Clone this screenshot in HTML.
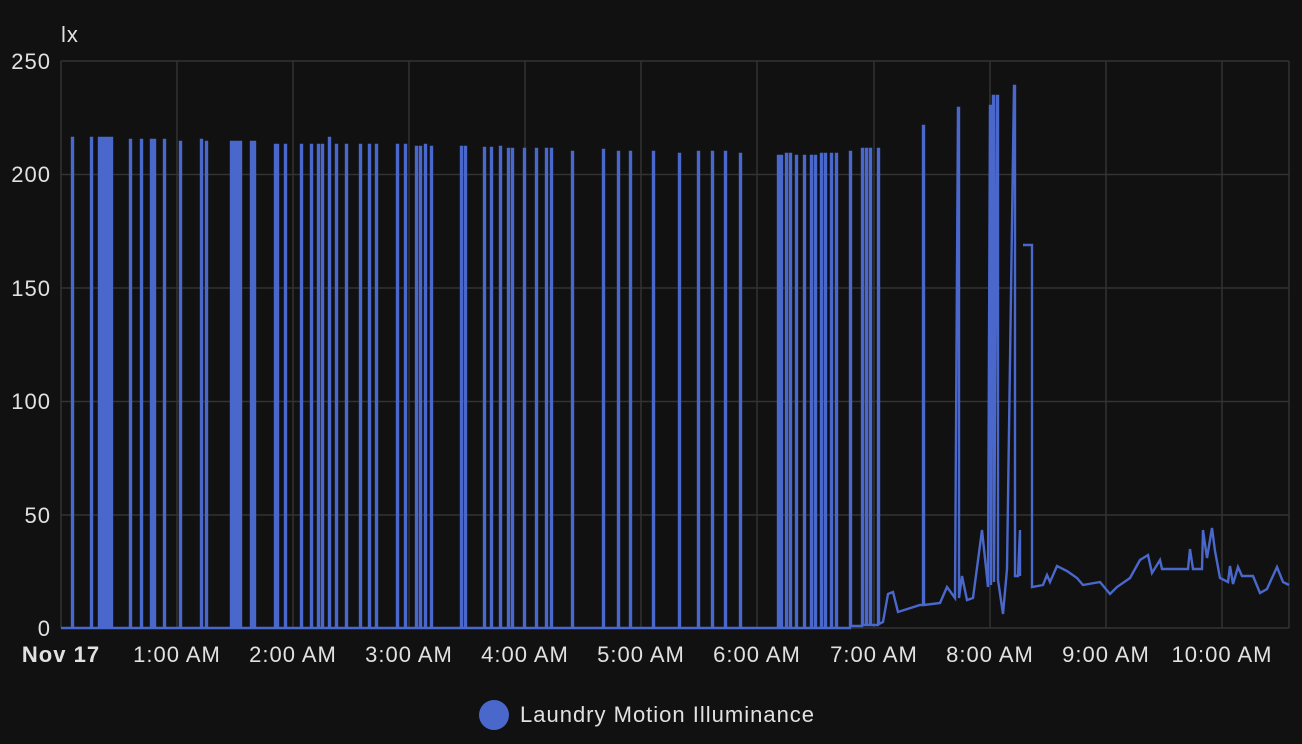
<!DOCTYPE html>
<html><head><meta charset="utf-8"><style>
html,body{margin:0;padding:0;background:#111111;width:1302px;height:744px;overflow:hidden}
svg{display:block}
text{font-family:"Liberation Sans",sans-serif;fill:#e1e1e1;letter-spacing:1px}
</style></head><body>
<svg width="1302" height="744" viewBox="0 0 1302 744">
<g stroke="#333" stroke-width="1.5" fill="none">
<path d="M61 61H1289M61 174.5H1289M61 288H1289M61 401.5H1289M61 515H1289M61 628H1289"/>
<path d="M61 61V628M177 61V628M293 61V628M409 61V628M525 61V628M641 61V628M757 61V628M874 61V628M990 61V628M1106 61V628M1222 61V628M1289 61V628"/>
</g>
<g font-size="22" text-anchor="end">
<text x="51" y="69">250</text><text x="51" y="182">200</text><text x="51" y="296">150</text><text x="51" y="409">100</text><text x="51" y="523">50</text><text x="51" y="636">0</text>
</g>
<text x="61" y="42" font-size="22">lx</text>
<g font-size="22" text-anchor="middle">
<text x="61" y="662" font-weight="bold" fill="#fff" letter-spacing="0">Nov 17</text>
<text x="177" y="662">1:00 AM</text><text x="293" y="662">2:00 AM</text><text x="409" y="662">3:00 AM</text><text x="525" y="662">4:00 AM</text><text x="641" y="662">5:00 AM</text><text x="757" y="662">6:00 AM</text><text x="874" y="662">7:00 AM</text><text x="990" y="662">8:00 AM</text><text x="1106" y="662">9:00 AM</text><text x="1222" y="662">10:00 AM</text>
</g>
<path fill="none" stroke="#4a68cc" stroke-width="2.4" stroke-linejoin="miter" d="M61 628
H72V138h1V628H91V138h1V628H99V138h1V628H102V138h1V628H104V138h1V628H106V138h1V628H108V138h1V628H111V138h1V628
H130V140h1V628H141V140h1V628H151V140h1V628H154V140h1V628H164V140h1V628H180V142h1V628H201V140h1V628H206V142h1V628
H231V142h1V628H234V142h1V628H237V142h1V628H240V142h1V628H251V142h1V628H254V142h1V628H275V145h1V628H277V145h1V628H285V145h1V628
H301V145h1V628H311V145h1V628H318V145h1V628H322V145h1V628H329V138h1V628H336V145h1V628H346V145h1V628H360V145h1V628H369V145h1V628H376V145h1V628
H397V145h1V628H405V145h1V628H416V147h1V628H420V147h1V628H425V145h1V628H431V147h1V628H461V147h1V628H465V147h1V628H484V148h1V628H491V148h1V628
H500V147h1V628H508V149h1V628H512V149h1V628H524V149h1V628H536V149h1V628H546V149h1V628H551V149h1V628H572V152h1V628H603V150h1V628H618V152h1V628
H630V152h1V628H653V152h1V628H679V154h1V628H698V152h1V628H712V152h1V628H725V152h1V628H740V154h1V628H778V156h1V628H781V156h1V628H786V154h1V628
H790V154h1V628H796V156h1V628H804V156h1V628H811V156h1V628H815V156h1V628H821V154h1V628H825V154h1V628H831V154h1V628H836V154h1V628H850V152h1V626
H862V149h1V625H866V149h1V625H870V149h1V625H878V149h1V624L883 622L888 594L893 592L898 612L920 605L923 605V126h1V605L940 603L947 587L955 598L958 108h1V598L962 576L967 600L973 598L982 530L988 587L990 106h1V585L993 96h1V582L997 96h1V580L1003 614L1007 569L1014 86h1V576L1018 576L1020 530V576
M1023 245H1032V587L1043 585L1047 575L1050 582L1057 566L1067 571L1077 578L1083 585L1100 582L1110 594L1117 587L1130 578L1140 560L1148 555L1152 573L1160 560L1162 569L1188 569L1190 549L1193 569L1202 569L1203 530L1207 558L1212 528L1215 551L1220 578L1228 582L1230 566L1233 584L1238 567L1242 576L1253 576L1260 593L1267 589L1277 567L1283 582L1289 585"/>
<circle cx="494" cy="715" r="15" fill="#4a68cc"/>
<text x="520" y="722" font-size="22">Laundry Motion Illuminance</text>
</svg>
</body></html>
